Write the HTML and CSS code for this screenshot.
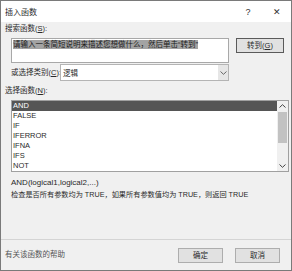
FILE: index.html
```html
<!DOCTYPE html>
<html lang="zh-CN">
<head>
  <meta charset="UTF-8" />
  <title>插入函数</title>
  <link rel="stylesheet" href="styles.css">
</head>
<body>
  <div class="window">
    <div class="titlebar">
      <span class="title">插入函数</span>
      <span class="tb-btn help">?</span>
      <span class="tb-btn close">✕</span>
    </div>

    <div class="content">
      <div class="label">搜索函数(<u>S</u>):</div>
      <div class="search-row">
        <div class="search-box"><span class="sel">请输入一条简短说明来描述您想做什么，然后单击“转到”</span></div>
        <button class="btn go-btn">转到(<u>G</u>)</button>
      </div>

      <div class="category-row">
        <span class="label">或选择类别(<u>C</u>):</span>
        <div class="select">
          <span class="select-value">逻辑</span>
          <span class="select-arrow">
            <svg width="7" height="4" viewBox="0 0 7 4"><path d="M0.5 0.5 L3.5 3.3 L6.5 0.5" fill="none" stroke="#666" stroke-width="1"/></svg>
          </span>
        </div>
      </div>

      <div class="label list-label">选择函数(<u>N</u>):</div>
      <div class="func-list">
        <ul class="items">
          <li class="active">AND</li>
          <li>FALSE</li>
          <li>IF</li>
          <li>IFERROR</li>
          <li>IFNA</li>
          <li>IFS</li>
          <li>NOT</li>
        </ul>
        <div class="scrollbar">
          <span class="arrow">
            <svg width="7" height="4" viewBox="0 0 7 4"><path d="M0.5 3.5 L3.5 0.7 L6.5 3.5" fill="none" stroke="#444" stroke-width="1"/></svg>
          </span>
          <span class="thumb"></span>
          <span class="track"></span>
          <span class="arrow">
            <svg width="7" height="4" viewBox="0 0 7 4"><path d="M0.5 0.5 L3.5 3.3 L6.5 0.5" fill="none" stroke="#444" stroke-width="1"/></svg>
          </span>
        </div>
      </div>

      <div class="signature">AND(logical1,logical2,...)</div>
      <div class="desc">检查是否所有参数均为 TRUE，如果所有参数值均为 TRUE，则返回 TRUE</div>
    </div>

    <div class="footer">
      <span class="help-link">有关该函数的帮助</span>
      <button class="btn">确定</button>
      <button class="btn">取消</button>
    </div>
  </div>
</body>
</html>
```

FILE: styles.css
```css
body {
  margin: 0;
  font-family: "Liberation Sans", "Noto Sans CJK SC", sans-serif;
  font-size: 7.5px;
  color: #2a2a2a;
}

u {
  text-decoration: underline;
}

.window {
  width: 292px;
  height: 271px;
  box-sizing: border-box;
  border: 1px solid #7a7a7a;
  background-color: #f0f0f0;
  display: flex;
  flex-direction: column;
}

.titlebar {
  height: 21px;
  background-color: #fff;
  display: flex;
  align-items: center;
  padding-left: 4px;
}

.title {
  flex: 1;
  font-size: 8px;
}

.tb-btn {
  text-align: center;
  color: #333;
}

.help {
  width: 30px;
  font-size: 9px;
}

.close {
  width: 28px;
  font-size: 9px;
}

.content {
  flex: 1;
  padding-left: 4px;
}

.label {
  line-height: 12px;
  height: 12px;
  margin-top: 1px;
  white-space: nowrap;
}

.search-row {
  display: flex;
  align-items: flex-start;
  margin-top: 3px;
  padding-left: 6px;
}

.search-box {
  width: 218px;
  height: 25px;
  box-sizing: border-box;
  background-color: #fff;
  border: 1px solid #a8a8a8;
  padding: 1px;
  line-height: 10px;
}

.sel {
  background-color: #a3a3a3;
  color: #1a1a1a;
}

.btn {
  font-family: inherit;
  font-size: 7.5px;
  color: #2a2a2a;
  background-color: #e1e1e1;
  border: 1px solid #adadad;
  width: 45px;
  height: 15px;
  padding: 0;
  line-height: 12px;
}

.go-btn {
  width: 48px;
  margin-left: 7px;
  border-color: #5a5a5a;
}

.category-row {
  display: flex;
  align-items: center;
  height: 17px;
  margin-top: 1px;
  padding-left: 6px;
}

.category-row .label {
  margin-top: 0;
  width: 49px;
  flex: none;
}

.select {
  width: 169px;
  height: 17px;
  box-sizing: border-box;
  background-color: #fff;
  border: 1px solid #b4b4b4;
  display: flex;
  align-items: center;
}

.select-value {
  flex: 1;
  padding-left: 2px;
}

.select-arrow {
  width: 10px;
  height: 15px;
  background-color: #e6e6e6;
  display: flex;
  align-items: center;
  justify-content: center;
}

.list-label {
  margin-top: 4px;
}

.func-list {
  margin: 3px 0 0 6px;
  width: 278px;
  height: 72px;
  box-sizing: border-box;
  background-color: #fff;
  border: 1px solid #a0a0a0;
  display: flex;
}

.items {
  flex: 1;
  list-style: none;
  margin: 0;
  padding: 0;
}

.items li {
  height: 10px;
  line-height: 10px;
  padding-left: 1px;
}

.items li.active {
  background-color: #555;
  color: #fff;
}

.scrollbar {
  width: 11px;
  background-color: #f0f0f0;
  display: flex;
  flex-direction: column;
}

.arrow {
  height: 10px;
  display: flex;
  align-items: center;
  justify-content: center;
}

.thumb {
  height: 31px;
  margin: 1px 1px 0;
  background-color: #c2c2c2;
}

.track {
  flex: 1;
}

.signature {
  margin: 5px 0 0 6px;
  line-height: 12px;
  font-size: 8px;
}

.desc {
  margin-left: 6px;
  line-height: 12px;
  font-size: 7.2px;
}

.footer {
  height: 31px;
  box-sizing: border-box;
  border-top: 1px solid #d4d4d4;
  display: flex;
  align-items: flex-start;
  padding: 8px 11px 0 4px;
  gap: 12px;
}

.help-link {
  flex: 1;
  color: #555;
  line-height: 14px;
}
```
